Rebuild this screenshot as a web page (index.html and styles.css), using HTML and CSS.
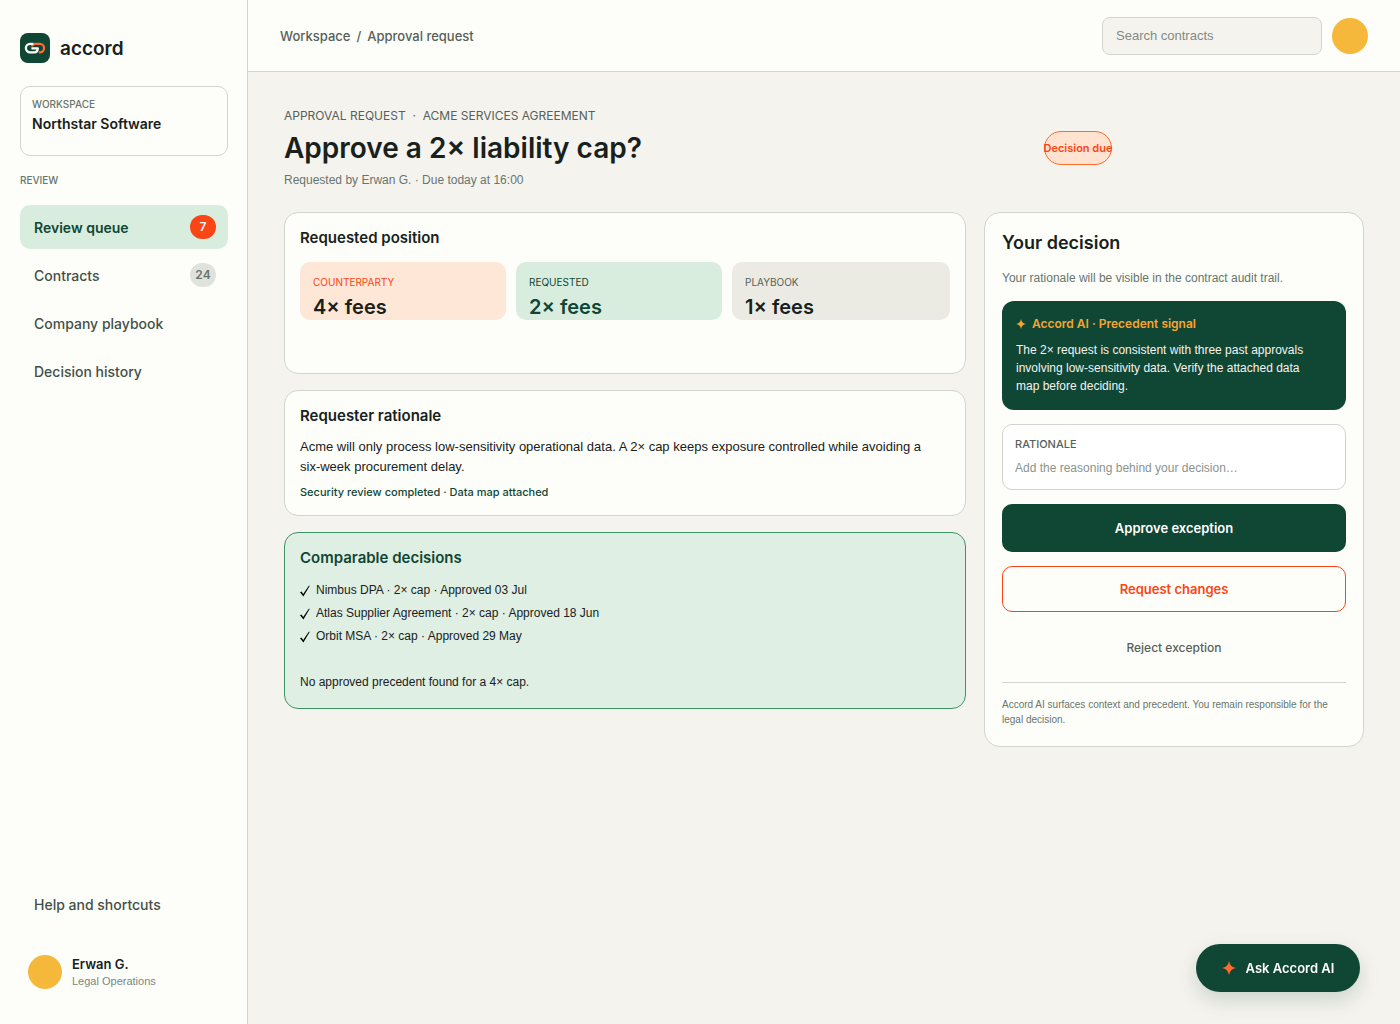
FILE: index.html
```html
<!DOCTYPE html>
<html lang="en">
<head>
  <meta charset="UTF-8" />
  <meta name="viewport" content="width=device-width, initial-scale=1.0"/>
  <title>Accord – Approval request</title>
  <link rel="stylesheet" href="styles.css">
</head>
<body>

  <aside class="sidebar">
    <a href="#" class="brand">
      <svg class="brand-mark" viewBox="0 0 30 30" fill="none" stroke-width="2.3" stroke-linejoin="round" aria-hidden="true">
        <rect width="30" height="30" rx="8" fill="#104634"/>
        <path d="M18.8 19.4h1a4.3 4.3 0 0 0 0-8.6h-4.6c-1.7 0-3 .9-3.4 2.6" stroke="#ff6b2c"/>
        <path d="M13.4 10.8h-3.2a4.3 4.3 0 0 0 0 8.6h4.2c1.9 0 3.2-1.4 3.4-4.1h-6.4" stroke="#fdfef9"/>
      </svg>
      <span>accord</span>
    </a>

    <div class="workspace">
      <span class="workspace-label">WORKSPACE</span>
      <strong>Northstar Software</strong>
    </div>

    <p class="nav-title">REVIEW</p>
    <nav class="nav">
      <a href="#" class="nav-item active">Review queue <span class="count">7</span></a>
      <a href="#" class="nav-item">Contracts <span class="count">24</span></a>
      <a href="#" class="nav-item">Company playbook</a>
      <a href="#" class="nav-item">Decision history</a>
    </nav>

    <a href="#" class="nav-item help">Help and shortcuts</a>
    <div class="user">
      <span class="avatar avatar-small"></span>
      <div>
        <p class="user-name">Erwan G.</p>
        <p class="user-role">Legal Operations</p>
      </div>
    </div>
  </aside>

  <div class="page">
    <header class="topbar">
      <div class="breadcrumb"><a href="#">Workspace</a><span>/</span><span>Approval request</span></div>
      <input type="search" class="search" placeholder="Search contracts" aria-label="Search contracts">
      <span class="avatar"></span>
    </header>

    <main class="content">
      <div class="page-head">
        <div class="page-title">
          <p class="eyebrow">APPROVAL REQUEST &nbsp;·&nbsp; ACME SERVICES AGREEMENT</p>
          <h1>Approve a 2× liability cap?</h1>
          <p class="meta">Requested by Erwan G. · Due today at 16:00</p>
        </div>
        <span class="due">Decision due</span>
      </div>

      <div class="columns">
        <div class="main-column">
          <section class="card position-card">
            <h2>Requested position</h2>
            <div class="positions">
              <div class="position counterparty">
                <span>COUNTERPARTY</span>
                <strong>4× fees</strong>
              </div>
              <div class="position requested">
                <span>REQUESTED</span>
                <strong>2× fees</strong>
              </div>
              <div class="position playbook">
                <span>PLAYBOOK</span>
                <strong>1× fees</strong>
              </div>
            </div>
          </section>

          <section class="card">
            <h2>Requester rationale</h2>
            <p class="rationale-text">Acme will only process low-sensitivity operational data. A 2× cap keeps exposure controlled while avoiding a <span class="nowrap">six-week</span> procurement delay.</p>
            <p class="evidence">Security review completed · Data map attached</p>
          </section>

          <section class="card comparable">
            <h2>Comparable decisions</h2>
            <ul>
              <li><svg class="check" viewBox="0 0 10 12" aria-hidden="true"><path d="M0 7.2 1.5 6.4 3.2 9 8.8.8 9.8.8 3.4 11.4z"/></svg>Nimbus DPA · 2× cap · Approved 03 Jul</li>
              <li><svg class="check" viewBox="0 0 10 12" aria-hidden="true"><path d="M0 7.2 1.5 6.4 3.2 9 8.8.8 9.8.8 3.4 11.4z"/></svg>Atlas Supplier Agreement · 2× cap · Approved 18 Jun</li>
              <li><svg class="check" viewBox="0 0 10 12" aria-hidden="true"><path d="M0 7.2 1.5 6.4 3.2 9 8.8.8 9.8.8 3.4 11.4z"/></svg>Orbit MSA · 2× cap · Approved 29 May</li>
            </ul>
            <p>No approved precedent found for a 4× cap.</p>
          </section>
        </div>

        <section class="decision">
          <h2>Your decision</h2>
          <p class="decision-note">Your rationale will be visible in the contract audit trail.</p>

          <div class="signal">
            <p class="signal-title">
              <svg class="spark" viewBox="0 0 14 14" aria-hidden="true"><path d="M7 0Q8 6 14 7 8 8 7 14 6 8 0 7 6 6 7 0z"/></svg>
              Accord AI · Precedent signal
            </p>
            <p>The 2× request is consistent with three past approvals involving low-sensitivity data. Verify the attached data map before deciding.</p>
          </div>

          <div class="field">
            <label for="rationale">RATIONALE</label>
            <input type="text" id="rationale" placeholder="Add the reasoning behind your decision…">
          </div>

          <button class="btn approve">Approve exception</button>
          <button class="btn changes">Request changes</button>
          <button class="btn reject">Reject exception</button>

          <p class="disclaimer">Accord AI surfaces context and precedent. You remain responsible for the legal decision.</p>
        </section>
      </div>
    </main>
  </div>

  <button class="ask-ai">
    <svg class="spark" viewBox="0 0 14 14" aria-hidden="true"><path d="M7 0Q8 6 14 7 8 8 7 14 6 8 0 7 6 6 7 0z"/></svg>
    Ask Accord AI
  </button>

</body>
</html>
```
FILE: styles.css
```css
/* General */
* {
  box-sizing: border-box;
}

body {
  margin: 0;
  min-height: 100vh;
  display: flex;
  font-family: "Liberation Sans", Arial, sans-serif;
  font-size: 12px;
  background: #f5f3ee;
  color: #18211c;
}

h1, h2, p, ul {
  margin: 0;
  padding: 0;
}

h1, h2, strong {
  font-weight: 600;
}

a {
  color: inherit;
  text-decoration: none;
}

input {
  font-family: inherit;
}

/* Headings, labels and controls */
h1, h2, strong, button, label,
.brand, .workspace-label, .nav-title, .nav-item, .user-name,
.breadcrumb, .eyebrow, .due, .position, .evidence, .signal-title {
  font-family: Inter, "Liberation Sans", sans-serif;
}

.nowrap {
  white-space: nowrap;
}

.avatar {
  flex: none;
  width: 36px;
  height: 36px;
  border-radius: 50%;
  background: #f5b83a;
}

.avatar-small {
  width: 34px;
  height: 34px;
}

/* Sidebar */
.sidebar {
  flex: none;
  width: 248px;
  min-height: 100vh;
  padding: 33px 19px 35px 20px;
  display: flex;
  flex-direction: column;
  background: #fdfef9;
  border-right: 1px solid #d0d5ce;
}

.brand {
  display: flex;
  align-items: center;
  gap: 10px;
  height: 30px;
  font-size: 19px;
  font-weight: 600;
}

.brand-mark {
  width: 30px;
  height: 30px;
}

.workspace {
  height: 70px;
  margin-top: 23px;
  padding: 9px 11px;
  border: 1px solid #d0d5ce;
  border-radius: 10px;
}

.workspace-label,
.nav-title {
  display: block;
  font-size: 10px;
  font-weight: 500;
  line-height: 16px;
  color: #68756c;
}

.workspace strong {
  display: block;
  font-size: 14px;
  line-height: 24px;
}

.nav-title {
  margin-top: 16px;
}

.nav {
  display: flex;
  flex-direction: column;
  gap: 4px;
  margin-top: 17px;
}

.nav-item {
  display: flex;
  align-items: center;
  justify-content: space-between;
  height: 44px;
  padding: 0 12px 0 14px;
  border-radius: 10px;
  font-size: 14px;
  font-weight: 500;
  color: #435047;
}

.nav-item.active {
  background: #d9eddf;
  color: #104634;
  font-weight: 600;
}

.count {
  min-width: 26px;
  border-radius: 12px;
  background: #e0e3dc;
  color: #68756c;
  font-size: 12px;
  font-weight: 600;
  line-height: 24px;
  text-align: center;
}

.active .count {
  background: #fa4616;
  color: #fff;
}

.help {
  margin-top: auto;
}

.user {
  display: flex;
  align-items: center;
  gap: 10px;
  margin-top: 29px;
  padding-left: 8px;
}

.user-name {
  font-size: 13px;
  font-weight: 600;
  line-height: 18px;
}

.user-role {
  font-size: 11px;
  line-height: 16px;
  color: #7b877f;
}

/* Top bar */
.page {
  flex: 1;
  min-width: 0;
}

.topbar {
  display: flex;
  align-items: center;
  gap: 10px;
  height: 72px;
  padding: 0 32px;
  background: #fdfef9;
  border-bottom: 1px solid #d0d5ce;
}

.breadcrumb {
  display: flex;
  gap: 6px;
  margin-right: auto;
  font-size: 13px;
  font-weight: 500;
  color: #566159;
}

.search {
  width: 220px;
  height: 38px;
  padding: 0 13px;
  border: 1px solid #d0d5ce;
  border-radius: 8px;
  background: #f5f3ee;
  font-size: 13px;
}

.search::placeholder {
  color: #7f8b83;
  opacity: 1;
}

/* Page heading */
.content {
  padding: 34px 36px;
}

.page-head {
  display: flex;
  align-items: center;
  margin-bottom: 22px;
}

.page-title {
  flex: 0 1 760px;
}

.eyebrow {
  line-height: 20px;
  color: #566159;
}

h1 {
  font-size: 28px;
  line-height: 44px;
}

.meta {
  line-height: 20px;
  color: #68756c;
}

.due {
  width: 68px;
  height: 34px;
  display: flex;
  align-items: center;
  justify-content: center;
  border: 1px solid #ff6b2c;
  border-radius: 17px;
  background: #ffe2d0;
  color: #fa4616;
  font-size: 11px;
  font-weight: 600;
  white-space: nowrap;
}

/* Cards */
.columns {
  display: grid;
  grid-template-columns: 1fr 380px;
  align-items: start;
  gap: 18px;
}

.main-column {
  display: flex;
  flex-direction: column;
  gap: 16px;
}

.card {
  padding: 15px;
  border: 1px solid #d0d5ce;
  border-radius: 14px;
  background: #fdfef9;
}

.card h2 {
  font-size: 15px;
  line-height: 20px;
}

.position-card {
  min-height: 162px;
}

.positions {
  display: grid;
  grid-template-columns: 206px 206px 1fr;
  gap: 10px;
  margin-top: 14px;
}

.position {
  height: 58px;
  padding: 12px 13px 0;
  border-radius: 10px;
}

.position span {
  display: block;
  font-size: 10px;
  line-height: 16px;
}

.position strong {
  display: block;
  font-size: 20px;
  line-height: 34px;
}

.counterparty {
  background: #ffe7d7;
}

.counterparty span {
  color: #fa4616;
}

.requested {
  background: #d9eddf;
  color: #104634;
}

.playbook {
  background: #ebeae3;
}

.playbook span {
  color: #566159;
}

.rationale-text {
  margin-top: 11px;
  font-size: 13px;
  line-height: 20px;
}

.evidence {
  margin-top: 8px;
  font-size: 11px;
  font-weight: 500;
  line-height: 15px;
  color: #104634;
}

.comparable {
  padding-bottom: 14px;
  background: #e0efe3;
  border-color: #3c9562;
}

.comparable h2 {
  color: #104634;
}

.comparable ul {
  margin: 11px 0 23px;
  list-style: none;
}

.comparable li,
.comparable p {
  display: flex;
  align-items: center;
  gap: 6px;
  line-height: 23px;
}

.check {
  width: 10px;
  height: 12px;
}

/* Decision panel */
.decision {
  display: flex;
  flex-direction: column;
  gap: 14px;
  padding: 17px 17px 19px;
  border: 1px solid #d0d5ce;
  border-radius: 16px;
  background: #fdfef9;
}

.decision h2 {
  font-size: 18px;
  line-height: 26px;
}

.decision-note {
  line-height: 17px;
  color: #68756c;
}

.signal {
  padding: 14px 24px 15px 14px;
  border-radius: 12px;
  background: #104634;
  color: #f5f3ee;
  line-height: 18px;
}

.signal-title {
  display: flex;
  align-items: center;
  gap: 6px;
  margin-bottom: 8px;
  color: #f7a530;
  font-weight: 600;
}

.spark {
  width: 10px;
  height: 10px;
  fill: currentColor;
}

.field {
  padding: 11px 12px;
  border: 1px solid #d0d5ce;
  border-radius: 10px;
  background: #fff;
}

.field label {
  display: block;
  font-size: 11px;
  font-weight: 500;
  line-height: 16px;
  color: #566159;
}

.field input {
  display: block;
  width: 100%;
  height: 20px;
  margin-top: 6px;
  padding: 0;
  border: 0;
  outline: 0;
  background: none;
  font-size: 12px;
}

.field input::placeholder {
  color: #8b938d;
  opacity: 1;
}

.btn {
  height: 46px;
  border: 1px solid transparent;
  border-radius: 10px;
  background: none;
  font-size: 13px;
  font-weight: 600;
  cursor: pointer;
}

.approve {
  height: 48px;
  background: #104634;
  color: #fff;
}

.changes {
  border-color: #fa4616;
  color: #fa4616;
}

.reject {
  height: 42px;
  font-size: 12px;
  font-weight: 500;
  color: #566159;
}

.disclaimer {
  padding-top: 14px;
  border-top: 1px solid #d0d5ce;
  font-size: 10px;
  line-height: 15px;
  color: #68756c;
}

/* Floating assistant button */
.ask-ai {
  position: fixed;
  right: 40px;
  bottom: 32px;
  display: flex;
  align-items: center;
  justify-content: center;
  gap: 10px;
  width: 164px;
  height: 48px;
  border: 0;
  border-radius: 24px;
  background: #104634;
  box-shadow: 0 8px 20px rgba(16, 70, 52, 0.18);
  color: #fff;
  font-size: 13px;
  font-weight: 600;
  cursor: pointer;
}

.ask-ai .spark {
  width: 14px;
  height: 14px;
  color: #ff6b2c;
}
```
